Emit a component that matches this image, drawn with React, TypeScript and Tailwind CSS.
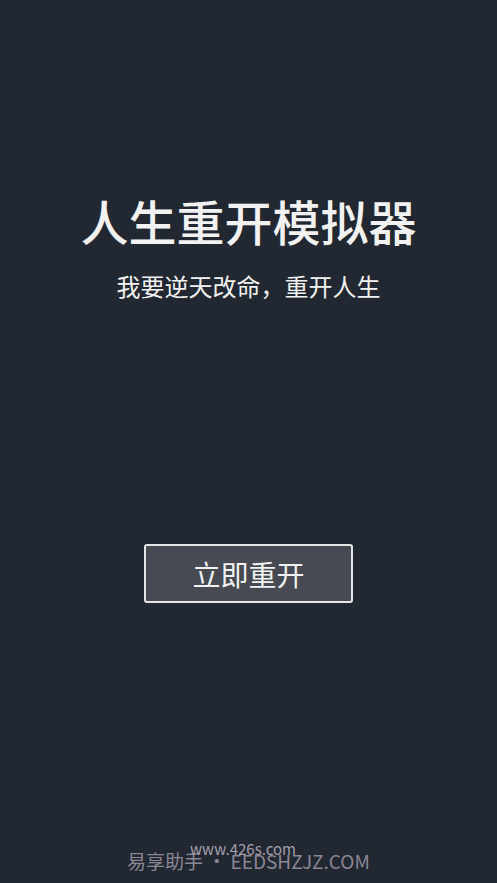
export default function App() {
  return (
    <div
      className="relative flex h-[883px] w-full flex-col items-center overflow-hidden bg-[#222831] text-[#f2f2f2]"
      style={{ fontFamily: '"Noto Sans CJK SC", "Noto Sans", sans-serif' }}
    >
      {/* Title block */}
      <h1 className="mt-[190px] text-[48px] font-medium leading-[60px] tracking-[0px]">人生重开模拟器</h1>
      <p className="mt-[20px] text-[24px] leading-[32px]">我要逆天改命，重开人生</p>

      {/* Start button */}
      <button className="mt-[242px] flex h-[59px] w-[209px] items-center justify-center rounded-[3px] border-2 border-[#e6e6e6] bg-[#474a52] text-[28px] leading-none text-[#f2f2f2]">
        立即重开
      </button>

      {/* Watermark overlay */}
      <div className="absolute bottom-[8px] left-0 right-0 flex justify-center">
        <div className="relative">
          <span className="text-[19px] leading-[28px] text-[#8b8696]">易享助手 • EEDSHZJZ.COM</span>
          <span className="absolute left-[63px] top-[-8px] text-[15px] leading-[20px] text-[#a29eab]">www.426s.com</span>
        </div>
      </div>
    </div>
  );
}
